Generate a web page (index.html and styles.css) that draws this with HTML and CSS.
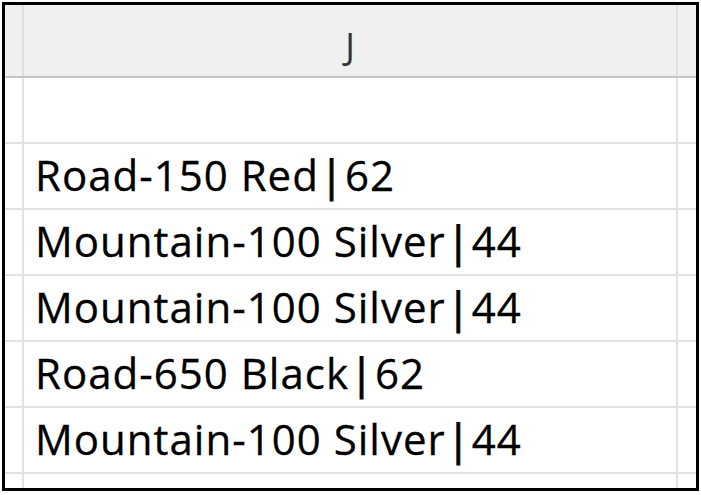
FILE: index.html
```html
<!DOCTYPE html>
<html>
<head>
<meta charset="utf-8">
<link rel="stylesheet" href="styles.css">
</head>
<body>
<div class="frame">
  <div class="row head">
    <div class="cell edge"></div>
    <div class="cell main colhead">J</div>
    <div class="cell edge last"></div>
  </div>
  <div class="row">
    <div class="cell edge"></div>
    <div class="cell main"></div>
    <div class="cell edge last"></div>
  </div>
  <div class="row">
    <div class="cell edge"></div>
    <div class="cell main">Road-150 Red<span class="bar">|</span>62</div>
    <div class="cell edge last"></div>
  </div>
  <div class="row">
    <div class="cell edge"></div>
    <div class="cell main">Mountain-100 Silver<span class="bar">|</span>44</div>
    <div class="cell edge last"></div>
  </div>
  <div class="row">
    <div class="cell edge"></div>
    <div class="cell main">Mountain-100 Silver<span class="bar">|</span>44</div>
    <div class="cell edge last"></div>
  </div>
  <div class="row">
    <div class="cell edge"></div>
    <div class="cell main">Road-650 Black<span class="bar">|</span>62</div>
    <div class="cell edge last"></div>
  </div>
  <div class="row">
    <div class="cell edge"></div>
    <div class="cell main">Mountain-100 Silver<span class="bar">|</span>44</div>
    <div class="cell edge last"></div>
  </div>
  <div class="row tail">
    <div class="cell edge"></div>
    <div class="cell main"></div>
    <div class="cell edge last"></div>
  </div>
</div>
</body>
</html>
```
FILE: styles.css
```css
html, body {
  margin: 0;
  padding: 0;
  background: #ffffff;
}
body {
  padding: 2px 0 0 2px;
}
.frame {
  width: 691px;
  height: 483px;
  border: 3px solid #000;
  overflow: hidden;
  display: flex;
  flex-direction: column;
  font-family: "Open Sans", Lato, sans-serif;
  color: #000;
}
.row {
  display: flex;
  height: 64px;
  border-bottom: 2px solid #e2e2e2;
  flex-shrink: 0;
}
.row.head {
  height: 71px;
  background: #f0f0f0;
  border-bottom: 2px solid #c6c6c6;
}
.row.tail {
  border-bottom: none;
}
.cell {
  flex-shrink: 0;
}
.edge {
  width: 17px;
  border-right: 2px solid #e2e2e2;
}
.edge.last {
  width: 16px;
  border-right: none;
}
.head .edge {
  border-right-color: #e0e0e0;
}
.main {
  width: 654px;
  border-right: 2px solid #e2e2e2;
  font-size: 42px;
  line-height: 61px;
  letter-spacing: 1px;
  padding-left: 11px;
  box-sizing: border-box;
  white-space: nowrap;
  -webkit-text-stroke: 0.3px #000;
}
.bar {
  padding: 0 1px;
  -webkit-text-stroke: 1px #000;
}
.colhead {
  font-size: 36px;
  line-height: 71px;
  padding-top: 5px;
  text-align: center;
  padding-left: 0;
  letter-spacing: 0;
  color: #333;
  -webkit-text-stroke: 0;
}
```
